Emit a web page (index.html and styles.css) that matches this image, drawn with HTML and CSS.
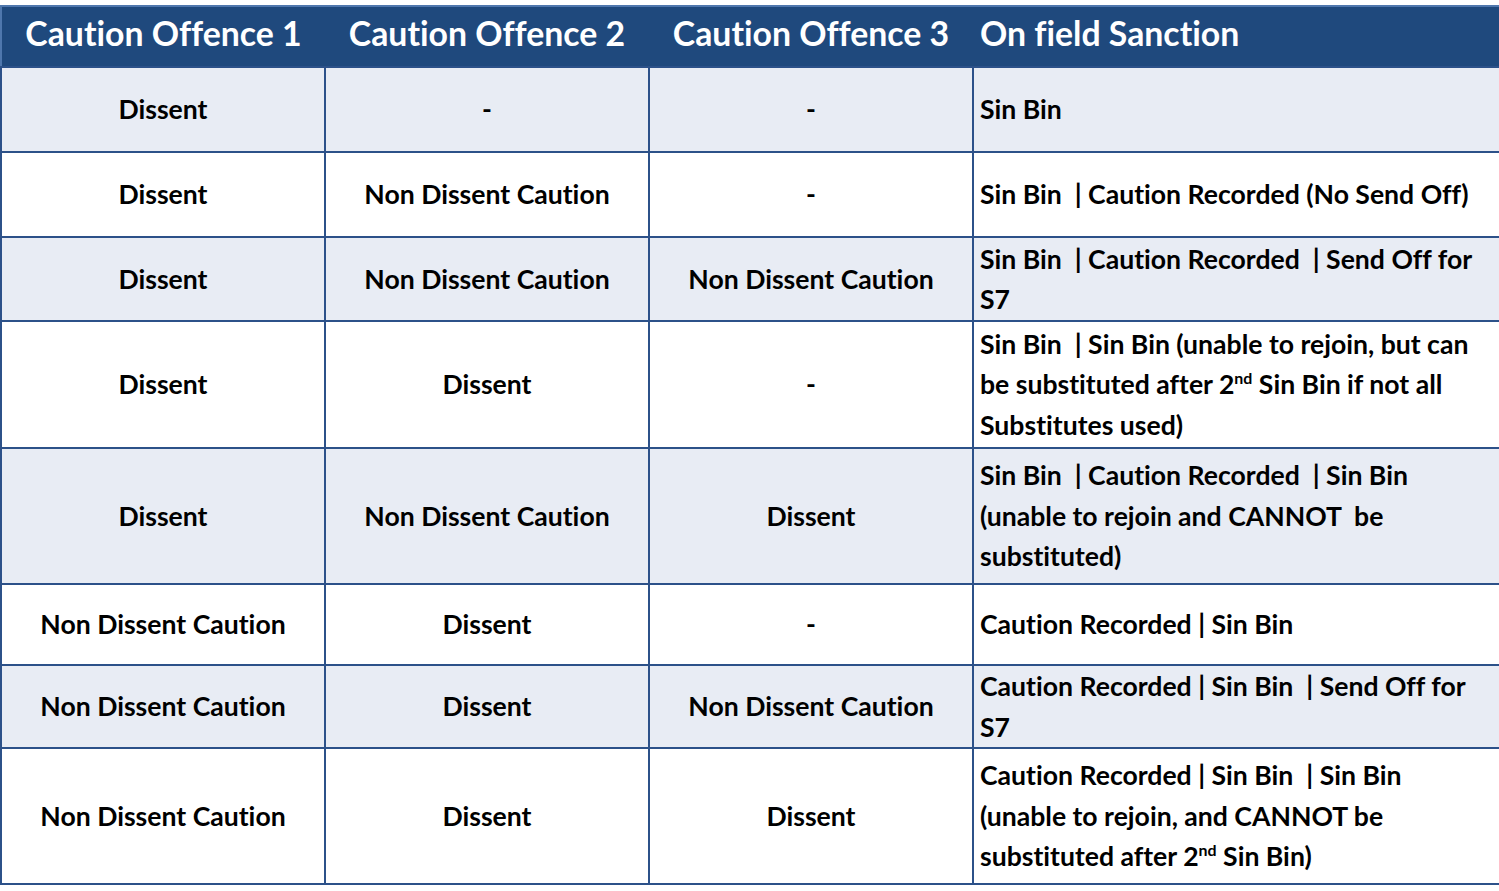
FILE: index.html
```html
<!DOCTYPE html>
<html lang="en">
<head>
<meta charset="utf-8">
<title>Caution Offences</title>
<link rel="stylesheet" href="styles.css">
</head>
<body>
<table class="sanctions">
  <colgroup>
    <col class="c1"><col class="c2"><col class="c3"><col class="c4">
  </colgroup>
  <thead>
    <tr class="head">
      <th class="ctr">Caution Offence 1</th>
      <th class="ctr">Caution Offence 2</th>
      <th class="ctr">Caution Offence 3</th>
      <th class="lft">On field Sanction</th>
    </tr>
  </thead>
  <tbody>
    <tr class="shade h85">
      <td>Dissent</td><td>-</td><td>-</td>
      <td class="res">Sin Bin</td>
    </tr>
    <tr class="h85">
      <td>Dissent</td><td>Non Dissent Caution</td><td>-</td>
      <td class="res">Sin Bin&nbsp; | Caution Recorded (No Send Off)</td>
    </tr>
    <tr class="shade h84">
      <td>Dissent</td><td>Non Dissent Caution</td><td>Non Dissent Caution</td>
      <td class="res">Sin Bin&nbsp; | Caution Recorded&nbsp; | Send Off for<br>S7</td>
    </tr>
    <tr class="h127">
      <td>Dissent</td><td>Dissent</td><td>-</td>
      <td class="res">Sin Bin&nbsp; | Sin Bin (unable to rejoin, but can<br>be substituted after 2<sup>nd</sup> Sin Bin if not all<br>Substitutes used)</td>
    </tr>
    <tr class="shade h136">
      <td>Dissent</td><td>Non Dissent Caution</td><td>Dissent</td>
      <td class="res">Sin Bin&nbsp; | Caution Recorded&nbsp; | Sin Bin<br>(unable to rejoin and CANNOT &nbsp;be<br>substituted)</td>
    </tr>
    <tr class="h81">
      <td>Non Dissent Caution</td><td>Dissent</td><td>-</td>
      <td class="res">Caution Recorded | Sin Bin</td>
    </tr>
    <tr class="shade h82">
      <td>Non Dissent Caution</td><td>Dissent</td><td>Non Dissent Caution</td>
      <td class="res">Caution Recorded | Sin Bin&nbsp; | Send Off for<br>S7</td>
    </tr>
    <tr class="h136">
      <td>Non Dissent Caution</td><td>Dissent</td><td>Dissent</td>
      <td class="res">Caution Recorded | Sin Bin&nbsp; | Sin Bin<br>(unable to rejoin, and CANNOT be<br>substituted after 2<sup>nd</sup> Sin Bin)</td>
    </tr>
  </tbody>
</table>
</body>
</html>
```

FILE: styles.css
```css
html, body {
  margin: 0;
  padding: 0;
  background: #ffffff;
}

body {
  padding-top: 5px;
  font-family: "Lato", "Open Sans", "Liberation Sans", sans-serif;
  font-weight: 700;
  color: #000000;
  font-variant-ligatures: none;
  font-feature-settings: "liga" 0, "dlig" 0;
}

.sanctions {
  border-collapse: collapse;
  table-layout: fixed;
  width: 1499px;
  border-top: 2px solid #4f77ad;
  border-left: 2px solid #4f77ad;
}

.c1, .c2, .c3 { width: 324px; }
.c4 { width: 527px; }

.head {
  height: 61px;
  background: #1f497d;
}

.head th {
  color: #ffffff;
  font-size: 33.8px;
  font-weight: 700;
  padding: 0 0 8px 0;
  white-space: nowrap;
}

.head th.ctr { text-align: center; }
.head th.lft { text-align: left; padding-left: 7px; }

tbody td {
  border: 2px solid #2c5189;
  font-size: 26.6px;
  line-height: 40.5px;
  text-align: center;
  vertical-align: middle;
  padding: 0;
  white-space: nowrap;
}

tbody td.res {
  text-align: left;
  padding-left: 6px;
}

.shade { background: #e8ecf4; }

.h85 { height: 85px; }
.h84 { height: 84px; }
.h127 { height: 127px; }
.h136 { height: 136px; }
.h81 { height: 81px; }
.h82 { height: 82px; }

sup {
  font-size: 60%;
  line-height: 0;
  vertical-align: 0.6em;
}
```
